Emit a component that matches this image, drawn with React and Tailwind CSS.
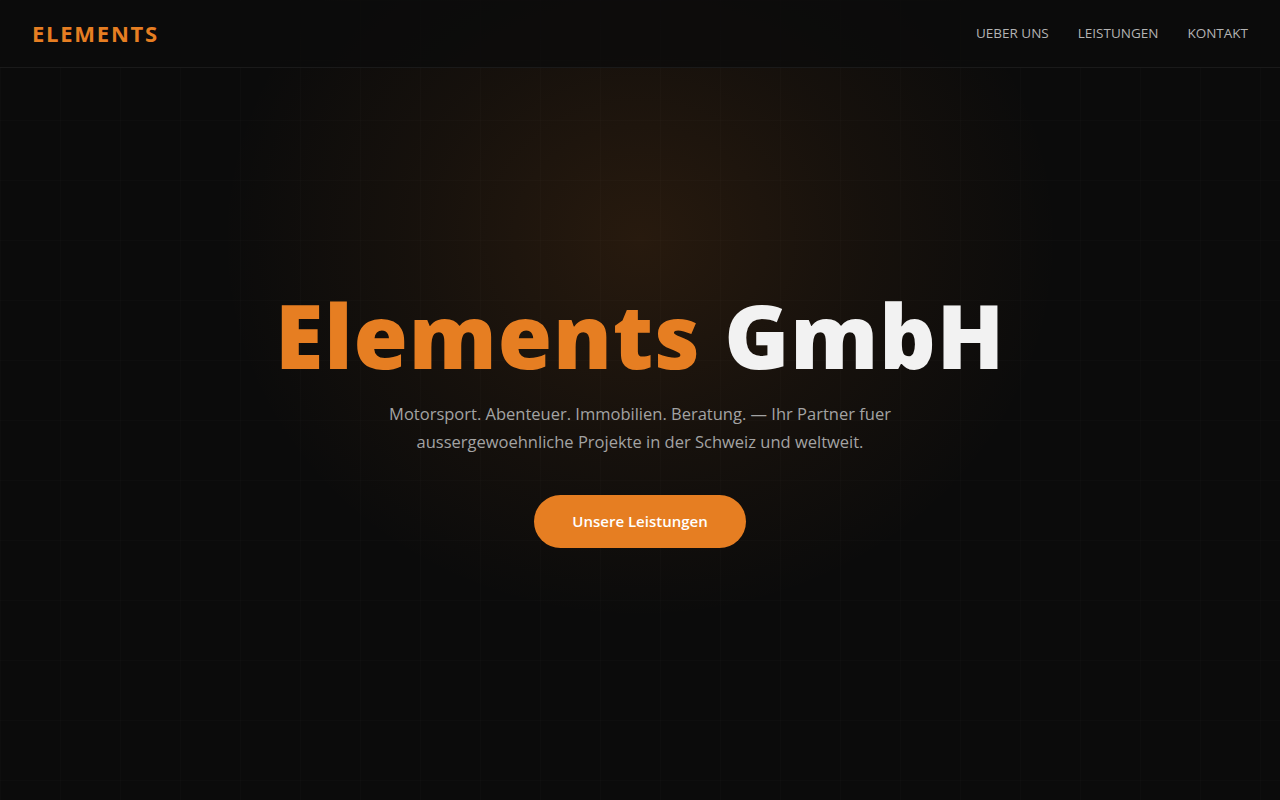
export default function App() {
  return (
    <div className="relative flex min-h-screen flex-col overflow-hidden bg-[#0b0b0b] font-['Open_Sans','Liberation_Sans',sans-serif]">
      {/* background glow + faint grid */}
      <div className="pointer-events-none absolute inset-0 bg-[radial-gradient(ellipse_420px_380px_at_640px_240px,rgba(230,126,34,0.13),rgba(230,126,34,0.05)_55%,transparent_100%)]" />
      <div className="pointer-events-none absolute inset-0 bg-[linear-gradient(rgba(255,255,255,0.01)_1px,transparent_1px),linear-gradient(90deg,rgba(255,255,255,0.01)_1px,transparent_1px)] bg-[size:60px_60px]" />

      <header className="relative z-10 flex h-[68px] items-center justify-between border-b border-[#1a1a1a] bg-[#0b0b0b]/80 px-8">
        <div className="text-[22px] font-bold tracking-[0.08em] text-[#e67e22]">ELEMENTS</div>
        <nav className="flex items-center gap-[29px] text-[13.5px] text-[#b3b3b3]">
          <a>UEBER UNS</a>
          <a>LEISTUNGEN</a>
          <a>KONTAKT</a>
        </nav>
      </header>

      <main className="relative z-10 flex flex-1 flex-col items-center justify-center pb-[29px] text-center">
        <h1 className="text-[88px] font-extrabold leading-none tracking-[0.01em]">
          <span className="text-[#e67e22]">Elements</span>{' '}
          <span className="text-[#f2f2f2]">GmbH</span>
        </h1>
        <p className="mt-[21px] max-w-[540px] text-[16.5px] leading-[28px] text-[#a3a3a3]">
          Motorsport. Abenteuer. Immobilien. Beratung. — Ihr Partner fuer aussergewoehnliche Projekte in der Schweiz und weltweit.
        </p>
        <button className="mt-[39px] h-[53px] w-[212px] rounded-full bg-[#e67e22] text-[15px] font-semibold text-white">
          Unsere Leistungen
        </button>
      </main>
    </div>
  );
}
